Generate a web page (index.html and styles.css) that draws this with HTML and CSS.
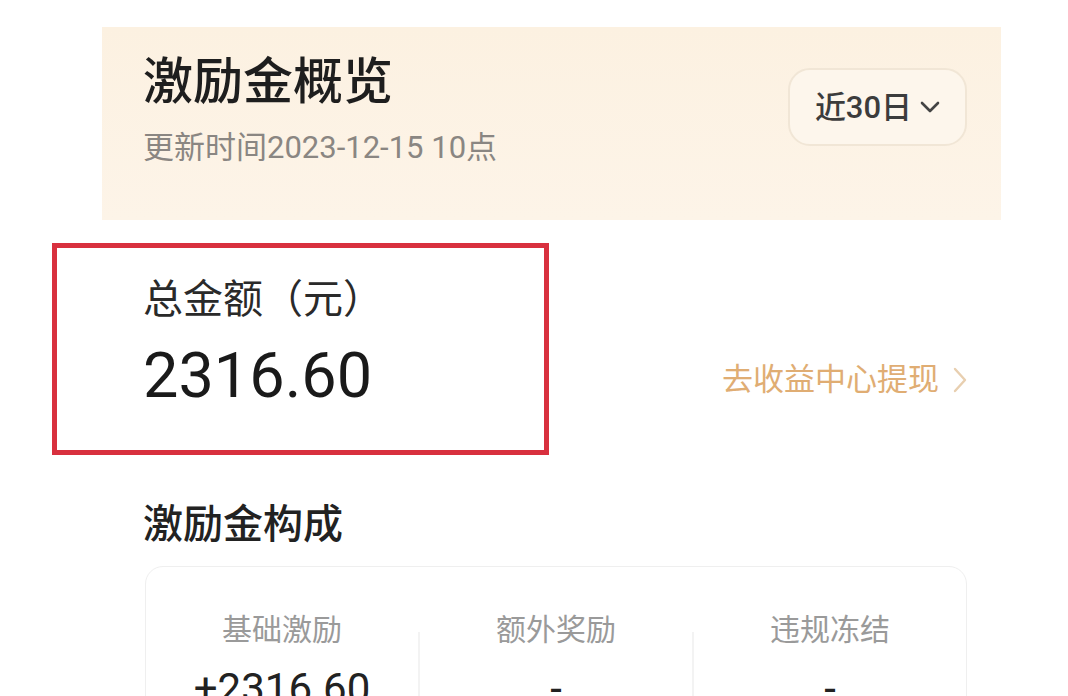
FILE: index.html
```html
<!DOCTYPE html>
<html lang="zh-CN">
<head>
<meta charset="utf-8">
<title>激励金概览</title>
<link rel="stylesheet" href="styles.css">
</head>
<body>
<div class="page">
  <section class="overview">
    <div class="overview-text">
      <h1 class="title">激励金概览</h1>
      <div class="updated">更新时间2023-12-15 10点</div>
    </div>
    <div class="range">
      <span>近30日</span>
      <svg class="range-chevron" width="20" height="12" viewBox="0 0 20 12"><path d="M2 2 L10 10 L18 2" fill="none" stroke="#444" stroke-width="2.6" stroke-linecap="round" stroke-linejoin="round"/></svg>
    </div>
  </section>

  <div class="total-row">
    <div class="total-box">
      <div class="total-label">总金额（元）</div>
      <div class="total-amount">2316.60</div>
    </div>
    <div class="withdraw">
      <span>去收益中心提现</span>
      <svg class="withdraw-chevron" width="14" height="26" viewBox="0 0 14 26"><path d="M2 2 L12 13 L2 24" fill="none" stroke="#e8cfb0" stroke-width="2.4" stroke-linecap="round" stroke-linejoin="round"/></svg>
    </div>
  </div>

  <h2 class="section-title">激励金构成</h2>

  <div class="card">
    <div class="col">
      <div class="col-label">基础激励</div>
      <div class="col-value">+2316.60</div>
    </div>
    <div class="divider"></div>
    <div class="col">
      <div class="col-label">额外奖励</div>
      <div class="col-value">-</div>
    </div>
    <div class="divider"></div>
    <div class="col">
      <div class="col-label">违规冻结</div>
      <div class="col-value">-</div>
    </div>
  </div>
</div>
</body>
</html>
```

FILE: styles.css
```css
html, body {
  margin: 0;
  padding: 0;
  background: #ffffff;
  height: 696px;
  overflow: hidden;
}

body {
  font-family: "Roboto", "Noto Sans CJK SC", sans-serif;
  color: #222222;
}

.page {
  padding-top: 27px;
}

.overview {
  margin-left: 102px;
  width: 899px;
  height: 193px;
  box-sizing: border-box;
  padding: 30px 34px 0 41px;
  display: flex;
  justify-content: space-between;
  align-items: flex-start;
  background: linear-gradient(180deg, #fcf1e1 0%, #fdf4e8 100%);
}

.title {
  margin: 0;
  font-size: 50px;
  line-height: 1;
  font-weight: 500;
  color: #1e1e1e;
}

.updated {
  margin-top: 25px;
  font-size: 31px;
  line-height: 1;
  color: #8a8682;
}

.range {
  margin-top: 11px;
  width: 179px;
  height: 78px;
  box-sizing: border-box;
  border: 2px solid #f1e6d6;
  border-radius: 22px;
  background: #fdf6ec;
  display: flex;
  align-items: center;
  justify-content: center;
  gap: 8px;
  font-size: 31px;
  line-height: 1;
  font-weight: 500;
  color: #3c3c3c;
}

.range-chevron {
  display: block;
}

.total-row {
  margin: 23px 0 0 52px;
  width: 915px;
  display: flex;
  align-items: flex-start;
}

.total-box {
  width: 497px;
  height: 212px;
  box-sizing: border-box;
  border: 5px solid #d8303e;
  padding: 32px 0 0 86px;
}

.total-label {
  font-size: 40px;
  line-height: 1;
  color: #2a2a2a;
}

.total-amount {
  margin-top: 24px;
  font-size: 63px;
  line-height: 1;
  color: #1a1a1a;
}

.withdraw {
  margin-left: auto;
  margin-top: 121px;
  display: flex;
  align-items: center;
  gap: 14px;
  font-size: 31px;
  line-height: 1;
  color: #e0ad73;
}

.withdraw-chevron {
  display: block;
}

.section-title {
  margin: 50px 0 0 143px;
  font-size: 40px;
  line-height: 1;
  font-weight: 500;
  color: #222222;
}

.card {
  margin: 21px 0 0 145px;
  width: 822px;
  height: 200px;
  box-sizing: border-box;
  border: 1.5px solid #efefef;
  border-radius: 18px;
  padding-top: 48px;
  display: flex;
  align-items: stretch;
}

.col {
  flex: 1;
  display: flex;
  flex-direction: column;
  align-items: center;
}

.col-label {
  font-size: 30px;
  line-height: 1;
  color: #9a9a9a;
}

.col-value {
  margin-top: 23px;
  font-size: 42px;
  line-height: 1;
  color: #222222;
}

.divider {
  width: 2px;
  margin-top: 17px;
  background: #f3f3f3;
}
```
